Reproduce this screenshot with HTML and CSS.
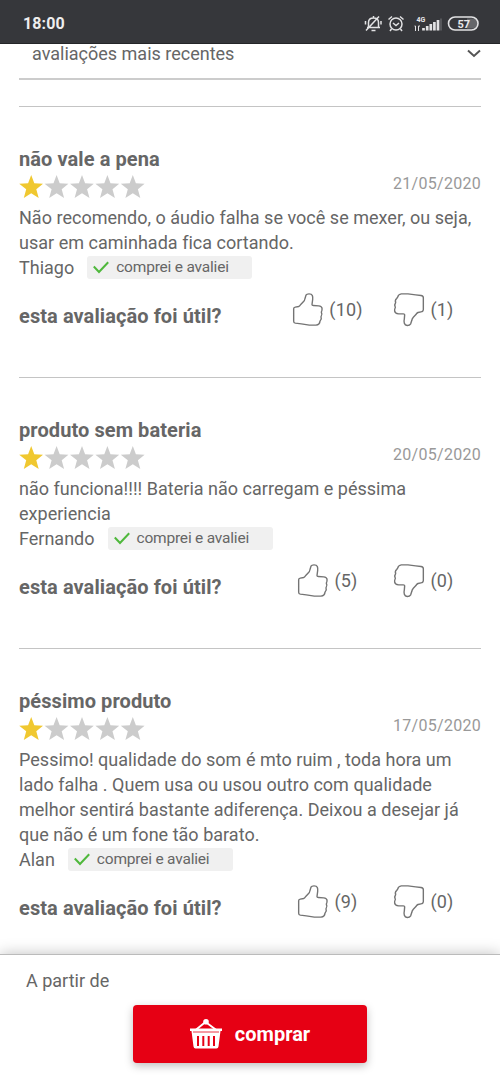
FILE: index.html
```html
<!DOCTYPE html>
<html lang="pt-BR">
<head>
<meta charset="utf-8">
<meta name="viewport" content="width=device-width">
<title>Avaliações</title>
<link rel="stylesheet" href="styles.css">
</head>
<body>
<svg class="defs" width="0" height="0">
  <symbol id="stars" viewBox="0 0 127 24">
    <g fill="#ccc">
      <path id="star" fill="#f0c830" d="M12.2 0 15.3 8.3 24 8.8 17.3 14.3 19.7 23 12.2 18.2 4.8 23 7.2 14.3.2 8.8 9.1 8.3z"/>
      <path d="M37.6 0 40.7 8.3 49.4 8.8 42.7 14.3 45.1 23 37.6 18.2 30.2 23 32.6 14.3 25.6 8.8 34.5 8.3z"/>
      <path d="M63 0 66.1 8.3 74.8 8.8 68.1 14.3 70.5 23 63 18.2 55.6 23 58 14.3 51 8.8 59.9 8.3z"/>
      <path d="M88.4 0 91.5 8.3 100.2 8.8 93.5 14.3 95.9 23 88.4 18.2 81 23 83.4 14.3 76.4 8.8 85.3 8.3z"/>
      <path d="M113.8 0 116.9 8.3 125.6 8.8 118.9 14.3 121.3 23 113.8 18.2 106.4 23 108.8 14.3 101.8 8.8 110.7 8.3z"/>
    </g>
  </symbol>
  <symbol id="up" viewBox="0 0 96 104">
    <path fill="none" stroke="#747474" stroke-width="4.2" stroke-linejoin="round" d="M5 50Q5 46 10 45L20 43Q23 42 27 36L34 29Q38 25 39 19L42 9Q44 5 51 5Q59 5 61 10Q63 15 62 22L60 37Q60 40 64 40L80 41Q89 42 90 48Q91 55 88 60Q92 67 87 74Q90 80 84 87Q83 98 72 99L52 99L28 95L10 93Q5 92 5 87Z"/>
  </symbol>
  <symbol id="down" viewBox="0 0 96 104">
    <path fill="none" stroke="#747474" stroke-width="4.2" stroke-linejoin="round" d="M14 15Q16 6 25 5L45 5L68 8L84 10Q91 11 91 17L91 53Q90 59 84 59L75 61Q71 63 68 68L61 75Q57 79 56 86L53 95Q50 100 43 100Q36 99 34 93Q32 88 34 80L35 68Q35 65 31 65L17 65Q6 64 5 57Q4 51 7 46Q3 38 8 31Q5 24 11 19Z"/>
  </symbol>
  <symbol id="check" viewBox="0 0 16 13">
    <path fill="none" stroke="#4fb83c" stroke-width="2" d="M.8 5.5 6 11 15.2 1.2"/>
  </symbol>
</svg>

<header class="status">
  <span class="clock">18:00</span>
  <svg class="status-icons" width="118" height="20" viewBox="0 0 118 20" fill="none" stroke="#e2e2e4" stroke-width="1.5">
    <path d="M3 13.500h13M4.500 13.500V8.500C4.500 5.500 6.500 4 9.500 4s5 1.500 5 4.500v5M9.500 2v2M7.500 16.500h4M2 16.500 15 2.500M1.500 7v3.500M17 7v3.500"/>
    <circle cx="32" cy="10" r="6"/><path d="M29 9l3 2.500L35 9M24.500 5.500l3.500-3M39.500 5.500l-3.500-3M27.500 15l-1.500 2M36.500 15l1.500 2"/>
    <path stroke-width="1" d="M51.500 12v5M50.500 12h1M54.500 17v-5h1.500"/>
    <path stroke-width="2.700" d="M59.500 16.500v-2.500M63.200 16.500v-4.500M66.800 16.500v-6.500M70.400 16.500v-8.500M74 16.500v-10.500"/>
    <path stroke="#626367" stroke-width="1.500" d="M77 16.500V4.500"/>
    <path fill="#65666a" stroke="none" d="M103 4.500h5.500a5 5 0 0 1 0 10H103z"/>
    <rect x="84.500" y="3" width="29.500" height="13" rx="6.500" stroke-width="1.600"/>
    <text class="net" x="52.500" y="8">4G</text>
    <text class="charge" x="93.500" y="13.500">57</text>
  </svg>
</header>

<main class="content">
  <div class="sort">
    <span>avaliações mais recentes</span>
    <svg width="14" height="9" viewBox="0 0 14 9" fill="none" stroke="#555" stroke-width="2"><path d="M1 1.500 7 7l6-5.500"/></svg>
  </div>

  <article class="review">
    <h2>não vale a pena</h2>
    <div class="rating"><svg width="127" height="24"><use href="#stars"/></svg><time>21/05/2020</time></div>
    <p>Não recomendo, o áudio falha se você se mexer, ou seja,<br>usar em caminhada fica cortando.</p>
    <div class="author"><span>Thiago</span><span class="badge"><svg width="16" height="13"><use href="#check"/></svg>comprei e avaliei</span></div>
    <div class="useful">
      <strong>esta avaliação foi útil?</strong>
      <span class="vote"><svg width="32" height="35"><use href="#up"/></svg>(10)</span>
      <span class="vote"><svg width="32" height="35"><use href="#down"/></svg>(1)</span>
    </div>
  </article>

  <article class="review">
    <h2>produto sem bateria</h2>
    <div class="rating"><svg width="127" height="24"><use href="#stars"/></svg><time>20/05/2020</time></div>
    <p>não funciona!!!! Bateria não carregam e péssima<br>experiencia</p>
    <div class="author"><span>Fernando</span><span class="badge"><svg width="16" height="13"><use href="#check"/></svg>comprei e avaliei</span></div>
    <div class="useful">
      <strong>esta avaliação foi útil?</strong>
      <span class="vote"><svg width="32" height="35"><use href="#up"/></svg>(5)</span>
      <span class="vote"><svg width="32" height="35"><use href="#down"/></svg>(0)</span>
    </div>
  </article>

  <article class="review">
    <h2>péssimo produto</h2>
    <div class="rating"><svg width="127" height="24"><use href="#stars"/></svg><time>17/05/2020</time></div>
    <p>Pessimo! qualidade do som é mto ruim , toda hora um<br>lado falha . Quem usa ou usou outro com qualidade<br>melhor sentirá bastante adiferença. Deixou a desejar já<br>que não é um fone tão barato.</p>
    <div class="author"><span>Alan</span><span class="badge"><svg width="16" height="13"><use href="#check"/></svg>comprei e avaliei</span></div>
    <div class="useful">
      <strong>esta avaliação foi útil?</strong>
      <span class="vote"><svg width="32" height="35"><use href="#up"/></svg>(9)</span>
      <span class="vote"><svg width="32" height="35"><use href="#down"/></svg>(0)</span>
    </div>
  </article>
</main>

<footer class="buybar">
  <span class="from">A partir de</span>
  <button class="buy" type="button">
    <svg width="32" height="30" viewBox="0 0 32 30">
      <path fill="none" stroke="#fff" stroke-width="1.800" d="M5 11.500 15.500 3 27 11.500"/>
      <circle cx="16" cy="2.800" r="2.800" fill="#fff"/>
      <path fill="#fff" fill-rule="evenodd" d="M0 9.500h32V12h-1.500l-2 15.500q-.3 2-2 2h-21q-1.700 0-2-2L1.500 12H0zM7 17h2v10H7zm5.300 0h2v10h-2zm5.400 0h2v10h-2zm5.300 0h2v10h-2z"/>
      <path stroke="#e60014" stroke-width=".8" d="M3 13h26"/>
    </svg>
    <span>comprar</span>
  </button>
</footer>
</body>
</html>
```
FILE: styles.css
```css
* { box-sizing: border-box; }
body {
  margin: 0;
  height: 1082px;
  display: flex;
  flex-direction: column;
  overflow: hidden;
  background: #fff;
  color: #666;
  font: 18px/25px Roboto, sans-serif;
}
.defs { position: absolute; }
svg { flex: none; }
.status {
  flex: none;
  height: 44px;
  padding: 4px 18px 0 23px;
  display: flex;
  align-items: center;
  justify-content: space-between;
  background: #36373b;
  border-bottom: 1px solid #242528;
  color: #eee;
}
.clock { font-size: 16px; font-weight: 700; letter-spacing: .1px; }
.net, .charge { fill: #e8e8ea; stroke: none; font-weight: 700; }
.net { font-size: 7px; }
.charge { font-size: 11px; }
.content { flex: none; height: 910px; padding: 0 19px; }
.sort {
  height: 36px;
  margin-bottom: 26px;
  padding: 1px 0 16px 13px;
  display: flex;
  align-items: center;
  justify-content: space-between;
  border-bottom: 2px solid #ccc;
}
.sort span { line-height: 18px; }
.review { height: 271px; padding-top: 39px; border-top: 1px solid #c4c4c4; }
h2, .useful strong { margin: 0; font-size: 20px; line-height: 26px; font-weight: 700; letter-spacing: .08px; }
.rating { height: 32px; padding-top: 2px; display: flex; justify-content: space-between; }
.rating svg { margin-top: 1px; }
time { color: #999; font-size: 16px; line-height: 20px; letter-spacing: .28px; }
p { margin: 0; padding-top: 1px; white-space: nowrap; letter-spacing: .02px; }
.author { display: flex; align-items: center; height: 25px; gap: 13px; }
.badge {
  width: 165px;
  height: 23px;
  padding-left: 6px;
  display: flex;
  align-items: center;
  gap: 7px;
  border-radius: 3px;
  background: #f0f0f0;
  font-size: 15.5px;
  letter-spacing: -.2px;
}
.useful { height: 58px; display: grid; grid-template-columns: 260px 96px 96px; align-items: center; }
.useful strong { padding-top: 13px; }
.vote { display: flex; align-items: center; justify-content: center; gap: 5px; padding-left: 1px; letter-spacing: .2px; }
.buybar {
  position: relative;
  flex: 1;
  padding: 13px 19px 0 26px;
  background: #fff;
  border-top: 1px solid #bbb;
  box-shadow: 0 0 14px rgba(0, 0, 0, .25);
}
.from { display: block; height: 37px; }
.buy {
  width: 234px;
  height: 58px;
  margin-left: 107px;
  padding: 0;
  display: flex;
  align-items: center;
  justify-content: center;
  gap: 13px;
  border: 0;
  border-radius: 4px;
  background: #e60014;
  box-shadow: 0 3px 8px rgba(0, 0, 0, .25);
  color: #fff;
  font: 700 20px/24px Roboto, sans-serif;
}
```
